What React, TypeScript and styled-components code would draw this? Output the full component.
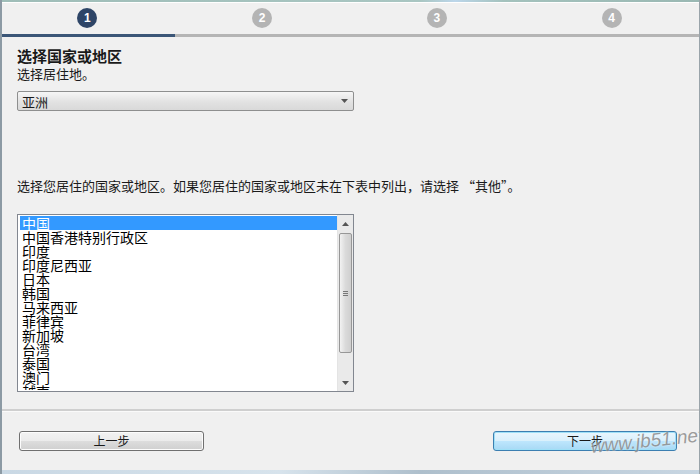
import styled, { createGlobalStyle } from "styled-components";

const GlobalStyle = createGlobalStyle`
  html, body {
    margin: 0;
    padding: 0;
    background: #f0f0f0;
  }
  * {
    box-sizing: border-box;
  }
`;

const FONT = `"Noto Sans CJK SC", "Liberation Sans", sans-serif`;

const Window = styled.div`
  position: relative;
  width: 700px;
  height: 474px;
  display: flex;
  flex-direction: column;
  background: #f0f0f0;
  border-left: 2px solid #8c9aa4;
  border-right: 1px solid #9aa4aa;
  font-family: ${FONT};
  color: #1a1a1a;
  overflow: hidden;
`;

const TopFrame = styled.div`
  height: 3px;
  background: linear-gradient(90deg, #9fbdb8 0%, #a9c6c2 60%, #bcd6ea 65%, #a4c2bd 72%, #9ab8b3 100%);
  border-bottom: 1px solid #ffffff;
`;

const Steps = styled.div`
  display: grid;
  grid-template-columns: repeat(4, 1fr);
  height: 31px;
  margin-left: -2px;
`;

const Step = styled.div`
  display: flex;
  align-items: flex-start;
  justify-content: center;
  padding-top: 5px;
`;

const StepDot = styled.div<{ $active?: boolean }>`
  width: 20px;
  height: 20px;
  border-radius: 50%;
  background: ${({ $active }) => ($active ? "#2e4567" : "#b4b4b4")};
  color: #ffffff;
  font-family: "Liberation Sans", sans-serif;
  font-weight: 700;
  font-size: 12px;
  line-height: 20px;
  text-align: center;
`;

const Progress = styled.div`
  display: grid;
  grid-template-columns: repeat(4, 1fr);
  height: 3px;
  margin-left: -2px;
  background: #b5b5b5;
`;

const ProgressPart = styled.div<{ $done?: boolean }>`
  background: ${({ $done }) => ($done ? "#3b5677" : "transparent")};
`;

const Content = styled.div`
  flex: 1;
  padding: 10px 0 0 15px;
  display: flex;
  flex-direction: column;
`;

const Title = styled.div`
  font-size: 15px;
  font-weight: 700;
  line-height: 18px;
`;

const Text = styled.div<{ $top?: number }>`
  font-size: 13px;
  line-height: 17px;
  margin-top: ${({ $top }) => $top ?? 0}px;
  white-space: nowrap;
`;

const Select = styled.div`
  margin-top: 9px;
  width: 337px;
  height: 20px;
  border: 1px solid #8e8f8f;
  border-radius: 2px;
  background: linear-gradient(#f6f6f6, #e2e2e2 55%, #d9d9d9);
  display: flex;
  align-items: center;
  justify-content: space-between;
  padding: 0 5px 0 4px;
  font-size: 13px;
`;

const ListBox = styled.div`
  margin-top: 20px;
  width: 337px;
  height: 178px;
  border: 1px solid #828790;
  background: #ffffff;
  display: flex;
  padding: 1px 0 1px 2px;
`;

const Items = styled.div`
  flex: 1;
  overflow: hidden;
`;

const Item = styled.div<{ $selected?: boolean }>`
  height: 14px;
  font-size: 14px;
  line-height: 14px;
  padding-left: 2px;
  white-space: nowrap;
  background: ${({ $selected }) => ($selected ? "#3399ff" : "transparent")};
  color: ${({ $selected }) => ($selected ? "#ffffff" : "#000000")};
`;

const ScrollBar = styled.div`
  width: 16px;
  margin: -1px 0;
  background: #eaeaea;
  border-left: 1px solid #e4e4e4;
  display: flex;
  flex-direction: column;
  align-items: center;
`;

const Arrow = styled.div`
  height: 17px;
  display: flex;
  align-items: center;
  justify-content: center;
`;

const Thumb = styled.div`
  margin-top: 1px;
  width: 13px;
  height: 120px;
  border: 1px solid #979797;
  border-radius: 2px;
  background: linear-gradient(90deg, #f2f2f2, #dadada 50%, #cfcfcf);
  display: flex;
  align-items: center;
  justify-content: center;
`;

const Grip = styled.div`
  width: 5px;
  height: 5px;
  border-top: 1px solid #777;
  border-bottom: 1px solid #777;
  position: relative;
  &::after {
    content: "";
    position: absolute;
    left: 0;
    right: 0;
    top: 1px;
    border-top: 1px solid #777;
  }
`;

const Spacer = styled.div`
  flex: 1;
`;

const Separator = styled.div`
  height: 3px;
  background: #cfcfcf;
  border-bottom: 1px solid #fafafa;
  margin-left: -2px;
`;

const Footer = styled.div`
  height: 58px;
  display: flex;
  justify-content: space-between;
  align-items: flex-start;
  padding: 19px 22px 0 17px;
`;

const Button = styled.div<{ $primary?: boolean }>`
  width: ${({ $primary }) => ($primary ? 184 : 185)}px;
  height: 20px;
  border-radius: 3px;
  border: 1px solid ${({ $primary }) => ($primary ? "#3c7fb1" : "#707070")};
  background: ${({ $primary }) =>
    $primary
      ? "linear-gradient(#eaf6fd, #d9f0fc 50%, #bee6fd 51%, #a7d9f5)"
      : "linear-gradient(#f2f2f2, #ebebeb 50%, #dddddd 51%, #cfcfcf)"};
  box-shadow: ${({ $primary }) =>
    $primary ? "inset 0 0 0 1px #9fe0f7" : "inset 0 0 0 1px #fcfcfc"};
  font-size: 12px;
  line-height: 18px;
  text-align: center;
`;

const BottomFrame = styled.div`
  height: 4px;
  background: linear-gradient(90deg, #c9d8e4, #d7e3ec 40%, #aebfcc 60%, #c8d6e2);
`;

const Watermark = styled.div`
  position: absolute;
  left: 590px;
  top: 436px;
  font-family: "Liberation Sans", sans-serif;
  font-style: italic;
  font-size: 19px;
  color: #8d8d8d;
  opacity: 0.85;
  transform: rotate(-6deg);
  transform-origin: left bottom;
  text-shadow: 0 0 2px #ffffff;
  white-space: nowrap;
`;

const countries = [
  "中国",
  "中国香港特别行政区",
  "印度",
  "印度尼西亚",
  "日本",
  "韩国",
  "马来西亚",
  "菲律宾",
  "新加坡",
  "台湾",
  "泰国",
  "澳门",
  "越南",
];

const SmallTriangle = ({ up }: { up?: boolean }) => (
  <svg width="7" height="4" viewBox="0 0 7 4">
    <path d={up ? "M0 4 L3.5 0 L7 4 Z" : "M0 0 L7 0 L3.5 4 Z"} fill="#555" />
  </svg>
);

const App = () => {
  return (
    <>
      <GlobalStyle />
      <Window>
        <TopFrame />
        <Steps>
          {[1, 2, 3, 4].map((n) => (
            <Step key={n}>
              <StepDot $active={n === 1}>{n}</StepDot>
            </Step>
          ))}
        </Steps>
        <Progress>
          {[1, 2, 3, 4].map((n) => (
            <ProgressPart key={n} $done={n === 1} />
          ))}
        </Progress>
        <Content>
          <Title>选择国家或地区</Title>
          <Text>选择居住地。</Text>
          <Select>
            <span>亚洲</span>
            <SmallTriangle />
          </Select>
          <Text $top={66}>
            选择您居住的国家或地区。如果您居住的国家或地区未在下表中列出，请选择 “其他”。
          </Text>
          <ListBox>
            <Items>
              {countries.map((c, i) => (
                <Item key={c} $selected={i === 0}>
                  {c}
                </Item>
              ))}
            </Items>
            <ScrollBar>
              <Arrow>
                <SmallTriangle up />
              </Arrow>
              <Thumb>
                <Grip />
              </Thumb>
              <Spacer />
              <Arrow>
                <SmallTriangle />
              </Arrow>
            </ScrollBar>
          </ListBox>
        </Content>
        <Separator />
        <Footer>
          <Button>上一步</Button>
          <Button $primary>下一步</Button>
        </Footer>
        <BottomFrame />
        <Watermark>www.jb51.net</Watermark>
      </Window>
    </>
  );
};

export default App;
